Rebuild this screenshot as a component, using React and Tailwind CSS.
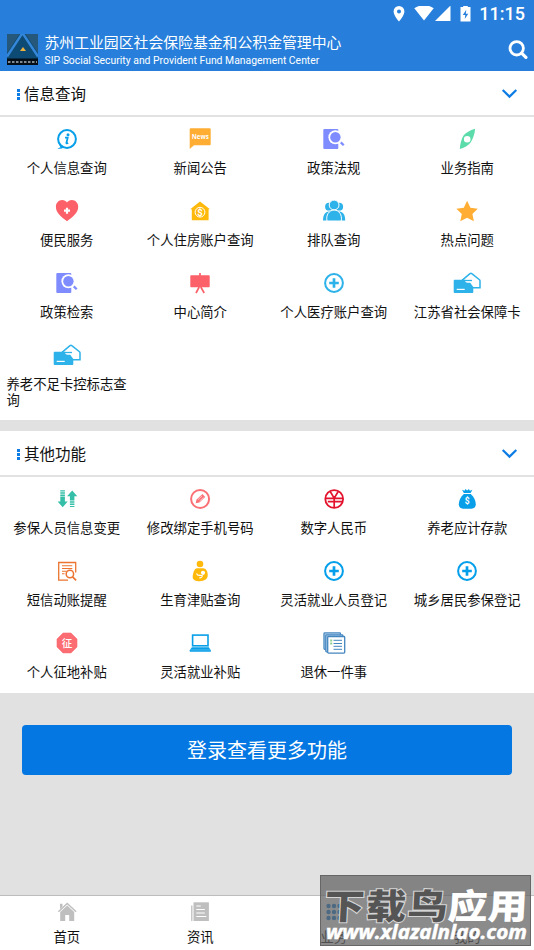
import { useState } from 'react'

const Icon = ({ children, className = '' }) => (
  <svg
    viewBox="0 0 28 24"
    fill="none"
    className={'block h-6 w-7 shrink-0 ' + className}
  >
    {children}
  </svg>
)

const InfoIcon = () => (
  <Icon>
    <circle cx="14" cy="12" r="8.9" stroke="#079fe9" strokeWidth="2" />
    <path d="M5.600 16.500 7.500 20.200 4.400 21.400c2.200.7 4.200.4 6.100-.7z" fill="#079fe9" />
    <circle cx="15" cy="7.700" r="1.500" fill="#079fe9" />
    <path
      d="M12 10.600h2.700l-1.300 5.400c-.1.600.7.500 1.700-.3"
      stroke="#079fe9"
      strokeWidth="1.800"
    />
  </Icon>
)

const NewsIcon = () => (
  <Icon>
    <path
      d="M4.700 1.300h19a1 1 0 0 1 1 1v15a1 1 0 0 1-1 1H8L3.700 22V2.300a1 1 0 0 1 1-1z"
      fill="#ffad33"
    />
    <text
      x="14.300"
      y="12.300"
      fill="#fff"
      textAnchor="middle"
      className="text-[6.2px] font-bold [font-family:'Open_Sans',sans-serif]"
    >
      News
    </text>
  </Icon>
)

const PolicyIcon = () => (
  <Icon>
    <rect x="3.300" y="2" width="15" height="20" rx="1" fill="#7f8cff" />
    <circle cx="15.400" cy="10.300" r="7" fill="#fff" />
    <path d="m19 14 3 3" stroke="#fff" strokeWidth="4" />
    <circle cx="15.400" cy="10.300" r="5.200" fill="#7f8cff" />
    <path d="m20.800 15.400 2.900 2.900" stroke="#7f8cff" strokeWidth="2.300" />
  </Icon>
)

const CompassIcon = () => (
  <Icon>
    <path
      fillRule="evenodd"
      d="M22 1.800c-5 1.700-9.300 3.800-11.500 6.600C8.300 12 7 17.500 6.800 22c4.200-1 8.700-3.400 11-6.800C20 12 22 6 22 1.800zM14.200 9a3.300 3.300 0 1 0 0 6.600 3.300 3.300 0 0 0 0-6.600z"
      fill="#5bdcaa"
    />
  </Icon>
)

const HeartIcon = () => (
  <Icon>
    <path
      d="M14 22.300C8 17.800 2.900 13.800 2.900 7.800 2.900 3.800 5.700 1 9.200 1c2.100 0 3.800 1 4.800 2.600C15 2 16.700 1 18.900 1c3.500 0 6.300 2.800 6.300 6.800 0 6-5.200 10-11.200 14.500z"
      fill="#fc6169"
    />
    <path d="M11 11.700h6M14 8.700v6" stroke="#fff" strokeWidth="2.200" />
  </Icon>
)

const HouseFundIcon = () => (
  <Icon>
    <path d="M14 2.500 24 10.300h-1.400v11H5.800v-11H4.200z" fill="#ffb90b" />
    <circle cx="14" cy="13.200" r="4.900" stroke="#fff" strokeWidth="1" />
    <text
      x="14"
      y="16.600"
      fill="#fff"
      textAnchor="middle"
      className="text-[9.5px] font-bold [font-family:Roboto,sans-serif]"
    >
      $
    </text>
  </Icon>
)

const QueueIcon = () => (
  <Icon>
    <g fill="#2db2e9">
      <circle cx="9" cy="7.700" r="3.900" />
      <circle cx="19.200" cy="7.700" r="3.900" />
      <path d="M3 21.500C3 16 5 12.500 9 12.500h10.200c4 0 6 3.500 6 9z" />
    </g>
    <circle cx="14.100" cy="6" r="4.900" fill="#2db2e9" stroke="#fff" />
    <path
      d="M7 22c-1.200-6 2-10.900 7.100-10.900s8.300 4.900 7.100 10.900z"
      fill="#2db2e9"
      stroke="#fff"
    />
  </Icon>
)

const StarIcon = () => (
  <Icon>
    <path
      d="m14.100 1.800 3.300 6.900 7.400 1-5.400 5.200 1.500 7.400-6.800-3.500-6.800 3.500 1.500-7.400-5.400-5.200 7.400-1z"
      fill="#ffad33"
    />
  </Icon>
)

const EaselIcon = () => (
  <Icon>
    <rect x="4.300" y="4.300" width="19.400" height="12" rx=".8" fill="#fc6169" />
    <path
      d="M14 2v3M13.200 16 10 22M14.800 16l3.400 6"
      stroke="#fc6169"
      strokeWidth="1.700"
    />
  </Icon>
)

const PlusIcon = ({ color = '#049fea' }) => (
  <Icon>
    <circle cx="14" cy="12" r="8.900" stroke={color} strokeWidth="2" />
    <path d="M9.200 12h9.600M14 7.200v9.600" stroke={color} strokeWidth="2.700" />
  </Icon>
)

const CardIcon = () => (
  <Icon>
    <path
      d="M9 9.300 17 2.700c.6-.5 1.200-.5 1.800 0l7.700 6c.3.300.5.600.5 1v7h-7"
      stroke="#2db2e9"
      strokeWidth="1.500"
    />
    <path
      d="M1.700 8.800h10.500c-.7 1.700.5 2.800 2.500 2.900h2.500l3.100 4.300v5a1 1 0 0 1-1 1H1.700a1 1 0 0 1-1-1V9.800a1 1 0 0 1 1-1z"
      fill="#2db2e9"
    />
    <path d="M11.500 9.500H19" stroke="#2db2e9" strokeWidth="1.300" />
    <path d="M3.700 18.400h8" stroke="#fff" strokeWidth="1.200" />
  </Icon>
)

const ChangeIcon = () => (
  <Icon>
    <g fill="#35bea8">
      <path d="M7.300 9.600h4.600v5h2.800l-5 5.700-5.100-5.700h2.700z" />
      <path d="M7.300 3.300h4.600v1.200H7.300zM7.300 5.300h4.600v1.500H7.300zM7.300 7.500h4.600v1.600H7.300z" />
      <path d="M16.900 13.500h4.500V9.200h2.900l-5.100-5.700-5.100 5.700h2.800z" />
      <path d="M16.900 14.300h4.500v1.500h-4.500zM16.900 16.500h4.500V18h-4.500zM16.900 18.900h4.500v1.200h-4.500z" />
    </g>
  </Icon>
)

const PencilIcon = () => (
  <Icon>
    <circle cx="14.100" cy="12" r="9" stroke="#fb7075" strokeWidth="2" />
    <path d="m9.700 16.200.7-3.500 6-5.600 2.800 2.800-5.800 5.700z" fill="#fb7075" />
    <path d="m12 12.700 4.100-3.900M13.600 14.200l4-3.900" stroke="#fff" strokeWidth=".6" />
  </Icon>
)

const YuanIcon = () => (
  <Icon>
    <circle cx="14.200" cy="12" r="8.900" stroke="#e3122d" strokeWidth="1.800" />
    <path
      d="m10.200 4.500 4 6.600 4-6.600M14.200 10.500v10.300M5.500 11.300h6.200l2.500-.2 2.500.2h6.200M7.800 14.700h15"
      stroke="#e3122d"
      strokeWidth="1.700"
    />
  </Icon>
)

const MoneyBagIcon = () => (
  <Icon>
    <path
      d="m9 2.800 2.500 1 1-1.700 1.700 1.300 1.700-1.300 1 1.700 2.500-1-1.800 3.300h-6.700z"
      fill="#089fe8"
    />
    <path
      d="M10.800 7h7c3 2.500 5 6.600 5 10.300 0 2.800-1.600 4.400-4.300 4.400h-8.400c-2.700 0-4.300-1.600-4.300-4.400C5.800 13.600 7.800 9.500 10.800 7z"
      fill="#089fe8"
    />
    <text
      x="14.300"
      y="17.300"
      fill="#fff"
      textAnchor="middle"
      className="text-[8.5px] font-bold [font-family:Roboto,sans-serif]"
    >
      $
    </text>
  </Icon>
)

const SmsIcon = () => (
  <Icon>
    <path d="M15 21.200H5.700V3.500h17v10" stroke="#ec7430" strokeWidth="1.300" />
    <path
      d="M9 6.800h10.300M9 9.500h10.300M9 12.200h4.500M9 14.800h2.500"
      stroke="#ec7430"
      strokeWidth="1.100"
    />
    <circle cx="16.900" cy="15" r="3.700" fill="#fff" stroke="#ec7430" strokeWidth="1.500" />
    <path d="m19.600 17.900 3.500 3.400" stroke="#ec7430" strokeWidth="1.700" />
  </Icon>
)

const MotherIcon = () => (
  <Icon>
    <circle cx="14" cy="5" r="3.300" fill="#ffb90b" />
    <path
      d="M11 9.300h6c3 0 5.100 3.500 4.700 7.500-.2 3.400-3.500 5.400-8 5.400-4.200 0-7-1.500-7-4 0-3.800 1.800-8.900 4.300-8.900z"
      fill="#ffb90b"
    />
    <circle cx="17" cy="13.800" r="2.100" fill="#fff" />
    <path
      d="M10.500 14.500c.6 1.500 1.800 2.300 4.200 1.700l1.600.5c-.2 1.500-1.400 2.400-3 2.100"
      stroke="#fff"
      strokeWidth="1.100"
    />
  </Icon>
)

const LandIcon = () => (
  <Icon>
    <path
      d="M10 2h8l6 6v8l-6 5.900h-8L4 16V8z"
      fill="#fb6d73"
      stroke="#fb6d73"
      strokeLinejoin="round"
      strokeWidth=".6"
    />
    <text
      x="14"
      y="15.900"
      fill="#fff"
      textAnchor="middle"
      className="text-[10.5px] font-medium [font-family:'Noto_Sans_CJK_SC',sans-serif]"
    >
      征
    </text>
  </Icon>
)

const LaptopIcon = () => (
  <Icon>
    <rect x="6.600" y="4.100" width="15.400" height="10.700" stroke="#089fe8" strokeWidth="1.600" />
    <path d="M5.800 16.200h17l2 3.100v1.400h-21v-1.400z" fill="#089fe8" />
    <path d="M4.500 18.900h19.600" stroke="#79cbf3" strokeWidth=".6" />
  </Icon>
)

const PapersIcon = () => (
  <Icon>
    <g fill="#c3dcf0" stroke="#4486c0" strokeWidth="1.300">
      <rect x="4" y="1.900" width="16.500" height="16.500" rx=".8" />
      <rect x="5.800" y="3.800" width="17" height="17" rx=".8" />
      <rect x="7.700" y="5.500" width="17" height="16.600" rx=".8" fill="#fff" />
    </g>
    <path d="M13.500 9.300H22M13.500 12.500H22M13.500 15.300H22M13.500 18.300H22" stroke="#4486c0" />
    <path d="M10.200 8.500h2v2h-2zM10.200 11.500h2v2h-2z" fill="#8fcf8d" />
  </Icon>
)

const HomeIcon = () => (
  <Icon>
    <path d="M7 3.700h2.500v3L7 9z" fill="#bfbfbf" />
    <path d="m5.400 11.700 8.800-8.200 8.900 8.200" stroke="#bfbfbf" strokeWidth="1.500" />
    <path d="m14.200 5.400 7 6.500V21h-5v-6h-4v6h-5v-9.100z" fill="#bfbfbf" />
  </Icon>
)

const PaperIcon = () => (
  <Icon>
    <path d="M7.500 2.300h15.400V21H7.500z" fill="#bfbfbf" />
    <path d="M6.500 5.500H5V20a1 1 0 0 0 1.500 1z" fill="#c7c7c7" />
    <path
      d="M10.300 6h4.500M10.300 9.500h8.500M10.300 13h8.500M10.300 16.500h10"
      stroke="#fff"
      strokeWidth="1.100"
    />
  </Icon>
)

const BusinessIcon = () => (
  <Icon>
    <g fill="#0677df">
      <circle cx="8.500" cy="6" r="2.200" />
      <circle cx="14" cy="6" r="2.200" />
      <circle cx="19.500" cy="6" r="2.200" />
      <circle cx="8.500" cy="12" r="2.200" />
      <circle cx="14" cy="12" r="2.200" />
      <circle cx="19.500" cy="12" r="2.200" />
      <circle cx="8.500" cy="18" r="2.200" />
      <circle cx="14" cy="18" r="2.200" />
      <circle cx="19.500" cy="18" r="2.200" />
    </g>
  </Icon>
)

const MeIcon = () => (
  <Icon>
    <circle cx="14" cy="7.500" r="4.500" fill="#bfbfbf" />
    <path d="M5.500 21c0-5 3.500-8 8.500-8s8.500 3 8.500 8z" fill="#bfbfbf" />
  </Icon>
)

const queryItems = [
  { label: '个人信息查询', icon: <InfoIcon /> },
  { label: '新闻公告', icon: <NewsIcon /> },
  { label: '政策法规', icon: <PolicyIcon /> },
  { label: '业务指南', icon: <CompassIcon /> },
  { label: '便民服务', icon: <HeartIcon /> },
  { label: '个人住房账户查询', icon: <HouseFundIcon /> },
  { label: '排队查询', icon: <QueueIcon /> },
  { label: '热点问题', icon: <StarIcon /> },
  { label: '政策检索', icon: <PolicyIcon /> },
  { label: '中心简介', icon: <EaselIcon /> },
  { label: '个人医疗账户查询', icon: <PlusIcon color="#2db2e9" /> },
  { label: '江苏省社会保障卡', icon: <CardIcon /> },
  { label: '养老不足卡控标志查询', icon: <CardIcon /> },
]

const otherItems = [
  { label: '参保人员信息变更', icon: <ChangeIcon /> },
  { label: '修改绑定手机号码', icon: <PencilIcon /> },
  { label: '数字人民币', icon: <YuanIcon /> },
  { label: '养老应计存款', icon: <MoneyBagIcon /> },
  { label: '短信动账提醒', icon: <SmsIcon /> },
  { label: '生育津贴查询', icon: <MotherIcon /> },
  { label: '灵活就业人员登记', icon: <PlusIcon /> },
  { label: '城乡居民参保登记', icon: <PlusIcon /> },
  { label: '个人征地补贴', icon: <LandIcon /> },
  { label: '灵活就业补贴', icon: <LaptopIcon /> },
  { label: '退休一件事', icon: <PapersIcon /> },
]

const tabs = [
  { label: '首页', icon: <HomeIcon /> },
  { label: '资讯', icon: <PaperIcon /> },
  { label: '业务', icon: <BusinessIcon /> },
  { label: '我的', icon: <MeIcon /> },
]

const StatusBar = () => (
  <div className="flex h-7 items-center justify-end pr-[9px] text-white">
    <svg viewBox="0 0 12 17" className="mr-[9px] h-[17px] w-3" fill="currentColor">
      <path
        fillRule="evenodd"
        d="M6 0A5.400 5.400 0 0 0 .6 5.400C.6 9.400 6 15.400 6 15.400s5.400-6 5.400-10A5.400 5.400 0 0 0 6 0zm0 3.400a2 2 0 1 1 0 4 2 2 0 0 1 0-4z"
      />
    </svg>
    <svg viewBox="0 0 20 16" className="mr-[1px] h-4 w-5" fill="currentColor">
      <path d="M.3 2.300C3 .3 6.300-.7 10-.7s7 1 9.700 3L10 14.500z" />
    </svg>
    <svg viewBox="0 0 16 16" className="mr-[9px] h-4 w-4" fill="currentColor">
      <path d="M15.500-.5V15H0z" />
    </svg>
    <svg viewBox="0 0 11 17" className="mr-2 h-[17px] w-[11px]">
      <path d="M3.200-.7h4.600V1h2.700v14.600H.5V1h2.700z" fill="#fff" />
      <path d="M6.300 3.700 2.800 9h2.500L4.700 13l3.600-5.300H5.800z" fill="#277fdb" />
    </svg>
    <span className="text-[18px] leading-none font-medium">11:15</span>
  </div>
)

const Header = () => (
  <header className="h-[71px] shrink-0 bg-[#277fdb]">
    <StatusBar />
    <div className="flex h-[43px] items-center pr-[6px] pl-[7px]">
      <svg viewBox="0 0 31 31" className="mr-[6.500px] h-[31px] w-[31px]">
        <rect width="31" height="31" fill="#0d4b75" />
        <path d="M0 0h12.500L0 19z" fill="#26587c" />
        <path d="M31 0H18.500L31 19z" fill="#26587c" />
        <path d="M15.500-1 0 22.500M15.500-1 31 22.500" stroke="#3587da" strokeWidth="2.400" />
        <path d="M0 24.500h31V31H0z" fill="#050d16" />
        <path d="m16 13 3 4h-6z" fill="#eeb23d" />
        <path d="M1 28h29" stroke="#aab3ba" strokeWidth="1.500" strokeDasharray="2.500 1.500" />
      </svg>
      <div className="flex-1 pt-[2px] text-white">
        <h1 className="text-[14.850px] leading-[19px]">
          苏州工业园区社会保险基金和公积金管理中心
        </h1>
        <p className="text-[10.400px] leading-[15px]">
          SIP Social Security and Provident Fund Management Center
        </p>
      </div>
      <svg viewBox="0 0 20 20" className="h-5 w-5" fill="none">
        <circle cx="8.700" cy="8.300" r="6.700" stroke="#fff" strokeWidth="2.800" />
        <path d="m13.600 13.200 4.300 4.200" stroke="#fff" strokeWidth="3.200" strokeLinecap="round" />
      </svg>
    </div>
  </header>
)

const Section = ({ title, items }) => {
  const [open, setOpen] = useState(true)

  return (
    <section className="bg-white">
      <button
        onClick={() => setOpen(!open)}
        className="flex h-[46px] w-full items-center border-b-2 border-[#e2e2e2] pt-[2px] pr-4 pl-[17px]"
      >
        <span className="mr-1 flex flex-col gap-[1px]">
          <i className="h-[3px] w-[3px] bg-[#0d7ce4]" />
          <i className="h-[3px] w-[3px] bg-[#0d7ce4]" />
          <i className="h-[3px] w-[3px] bg-[#0d7ce4]" />
        </span>
        <span className="flex-1 pt-[1px] text-left text-[15.500px] leading-5">
          {title}
        </span>
        <svg viewBox="0 0 17 12" className="h-3 w-[17px]" fill="none">
          <path d="m1.700 2 6.800 6.600L15.300 2" stroke="#0d7ce4" strokeWidth="2.200" />
        </svg>
      </button>
      {open && (
        <div className="grid grid-cols-4">
          {items.map((item) => (
            <div
              key={item.label}
              className="flex min-h-[72px] flex-col items-center px-[6.500px] pt-[10px] pb-3"
            >
              {item.icon}
              <span className="mt-[10px] text-[13.350px] leading-[15.500px]">
                {item.label}
              </span>
            </div>
          ))}
        </div>
      )}
    </section>
  )
}

const TabBar = () => (
  <nav className="grid h-[55px] shrink-0 grid-cols-4 border-t border-[#bdbdbd] bg-white">
    {tabs.map((tab) => (
      <button key={tab.label} className="flex flex-col items-center pt-1">
        {tab.icon}
        <span className="mt-[6px] text-[13.350px] leading-4">{tab.label}</span>
      </button>
    ))}
  </nav>
)

const Watermark = () => (
  <div className="absolute right-[3px] bottom-1 h-[71px] w-[211px] border border-[#666] bg-[#646464]/75">
    <svg viewBox="0 0 209 69" className="h-full w-full">
      <g
        transform="translate(3 43) skewX(-3) scale(1 .87)"
        className="text-[40px] font-black [font-family:'Noto_Sans_CJK_SC',sans-serif]"
      >
        <text
          fill="#555"
          stroke="#d5d5d5"
          strokeWidth="2.400"
          paintOrder="stroke"
          textLength="123"
        >
          下载鸟
        </text>
        <text x="123" fill="#fff" textLength="80">
          应用
        </text>
      </g>
      <text
        x="5"
        y="63"
        fill="#fff"
        stroke="#fff"
        strokeWidth=".5"
        textLength="201"
        lengthAdjust="spacingAndGlyphs"
        className="text-[20px] font-bold italic [font-family:'Open_Sans',sans-serif]"
      >
        www.xlazalnlao.com
      </text>
    </svg>
  </div>
)

export default function App() {
  return (
    <div className="relative flex h-[950px] w-[534px] flex-col overflow-hidden bg-[#e1e1e1] text-[#111] [font-family:Roboto,'Noto_Sans_CJK_SC',sans-serif]">
      <Header />
      <main className="flex-1">
        <Section title="信息查询" items={queryItems} />
        <div className="h-[11px]" />
        <Section title="其他功能" items={otherItems} />
        <div className="px-[22px] pt-8">
          <button className="h-[50px] w-full rounded bg-[#0477e3] pt-[2px] text-xl text-white">
            登录查看更多功能
          </button>
        </div>
      </main>
      <TabBar />
      <Watermark />
    </div>
  )
}
